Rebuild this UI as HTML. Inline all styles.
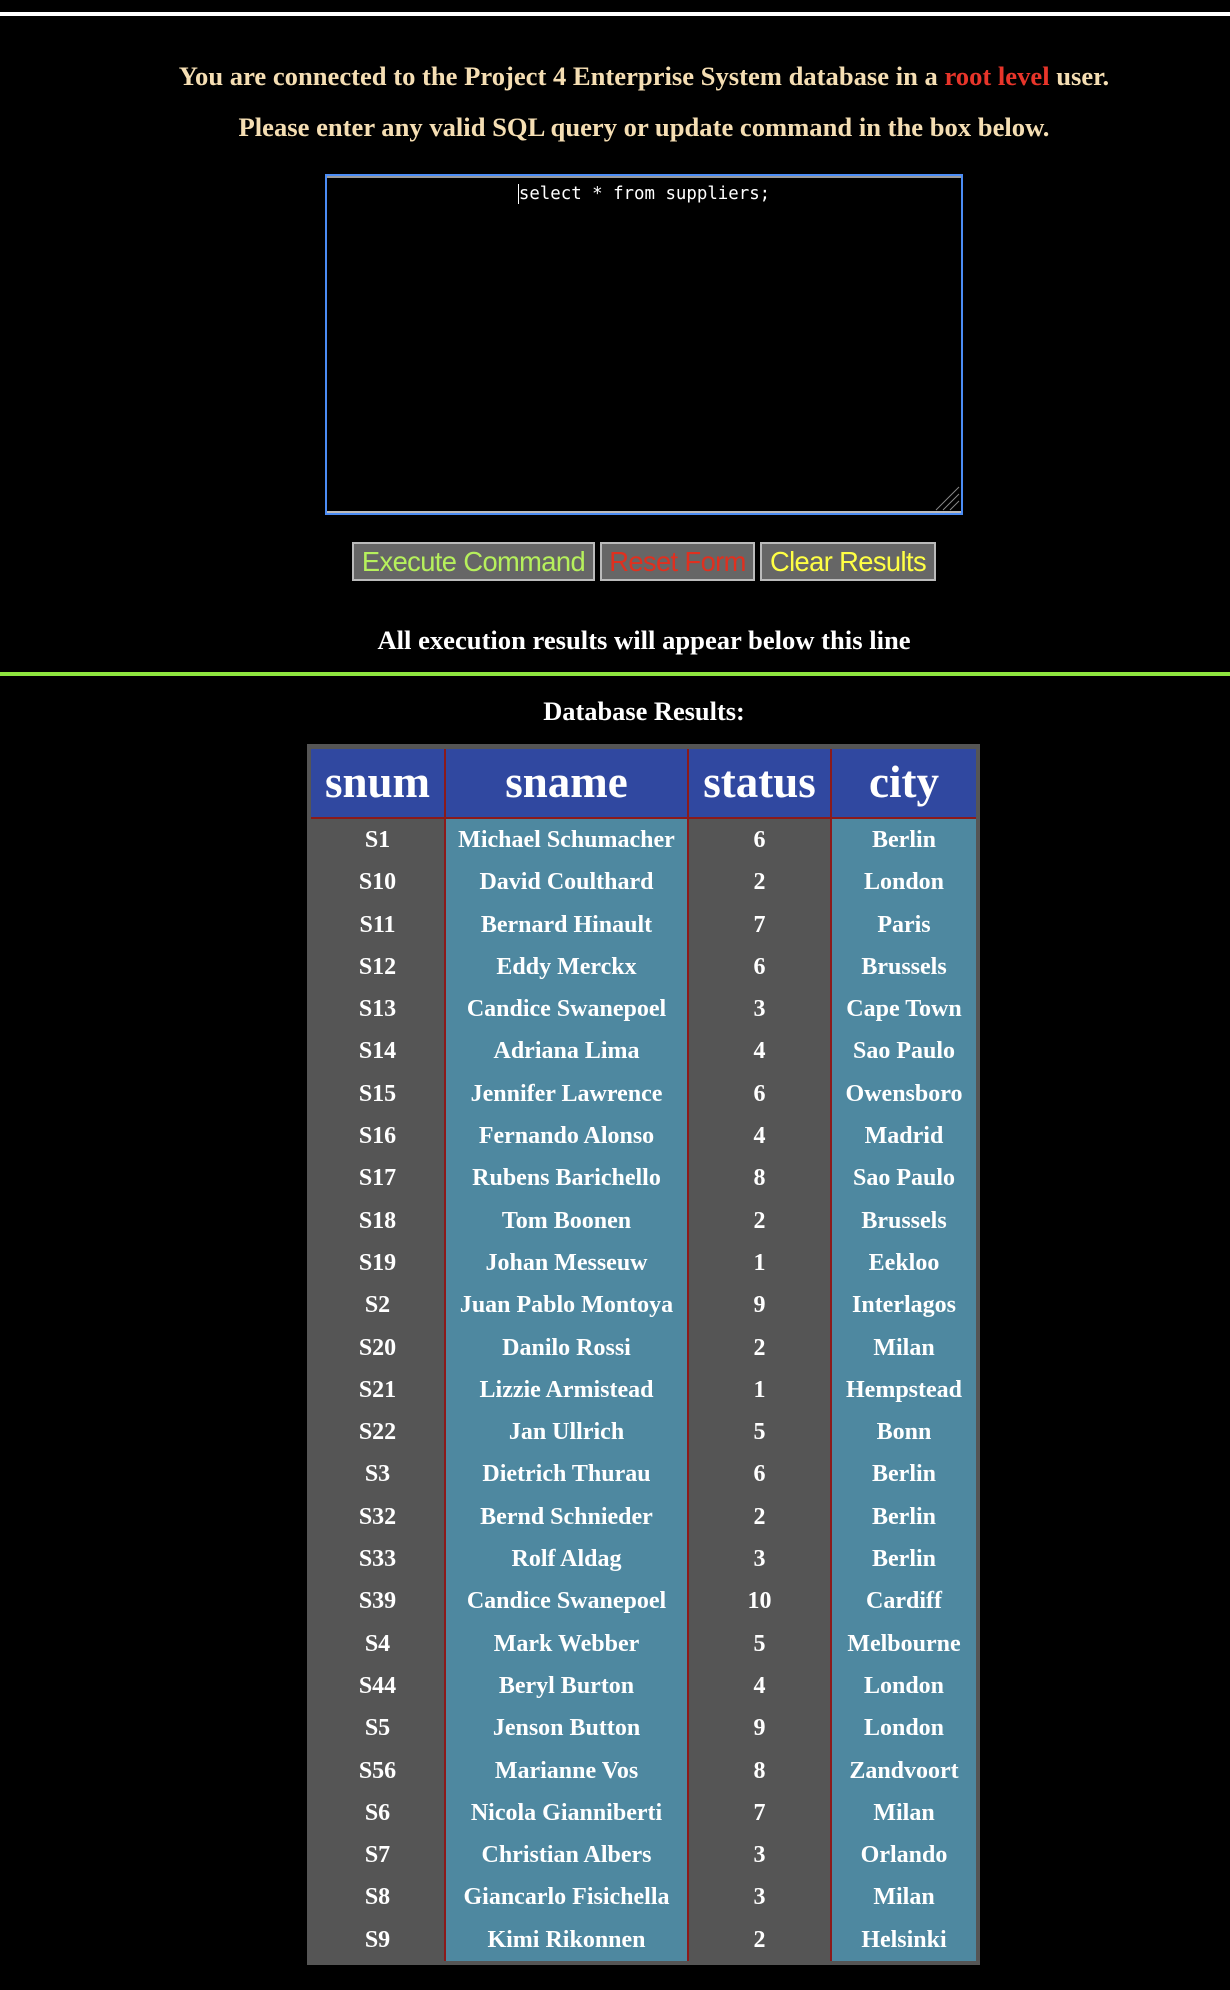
<!DOCTYPE html>
<html><head><meta charset="utf-8"><style>
*{margin:0;padding:0;box-sizing:border-box}
html,body{width:1230px;height:1990px;background:#000;overflow:hidden}
body{position:relative;font-family:"Liberation Serif",serif;font-weight:bold}
.abs{position:absolute}
.c{left:29px;width:1230px;text-align:center;white-space:nowrap}
.wheat{color:#f5deb3;font-size:26.6px;line-height:30px}
.btn{position:absolute;top:542px;height:39px;background:#666;border:2px solid #bbb;font-family:"Liberation Sans",sans-serif;font-weight:normal;font-size:27.3px;line-height:35px;text-align:center;letter-spacing:-0.6px;white-space:nowrap;overflow:hidden}
.tbl{position:absolute;left:307px;top:744px;width:673px;height:1221px;background:#555;padding:5px 4px}
.row{display:flex;width:665px}
.row div{text-align:center;color:#fff;white-space:nowrap}
.h div{height:70px;background:#3048a0;font-size:45px;line-height:66px;border-bottom:2px solid #8b1a1a}
.d div{height:42.3px;font-size:24px;line-height:42px}
.c1{width:133px}
.c2{width:245px;border-left:2px solid #8b1a1a;border-right:2px solid #8b1a1a}
.c3{width:141px}
.c4{width:146px;border-left:2px solid #8b1a1a}
.d .c2,.d .c4{background:#4e88a0}
</style></head><body>
<div class="abs" style="left:0;top:12px;width:1230px;height:4px;background:#fff"></div>
<div class="abs c wheat" style="top:61px">You are connected to the Project 4 Enterprise System database in a <span style="color:#e8352a">root level</span> user.</div>
<div class="abs c wheat" style="top:112px">Please enter any valid SQL query or update command in the box below.</div>
<div class="abs" style="left:325px;top:174px;width:638px;height:341px;border:2px solid #4b8cf5;box-shadow:inset 0 2px 0 #999,inset 0 -2px 0 #bbb;background:#000">
<div style="font-family:'DejaVu Sans Mono','Liberation Mono',monospace;font-weight:normal;color:#fff;font-size:17.4px;text-align:center;margin-top:7px;line-height:22px"><span style="border-left:1px solid #fff">select * from suppliers;</span></div>
<svg class="abs" style="right:1px;bottom:2px" width="26" height="26"><path d="M25 2L2 25M25 9L9 25M25 16L16 25" stroke="#888" stroke-width="1"/></svg>
</div>
<div class="btn" style="left:352px;width:243px;color:#b6f05c">Execute Command</div>
<div class="btn" style="left:600px;width:155px;color:#e0301f">Reset Form</div>
<div class="btn" style="left:760px;width:176px;color:#ffff44">Clear Results</div>
<div class="abs c" style="top:625px;color:#fff;font-size:26.6px;line-height:30px">All execution results will appear below this line</div>
<div class="abs" style="left:0;top:672px;width:1230px;height:4px;background:#8ee53f"></div>
<div class="abs c" style="top:696px;color:#fff;font-size:26.4px;line-height:30px">Database Results:</div>
<div class="tbl">
<div class="row h"><div class="c1">snum</div><div class="c2">sname</div><div class="c3">status</div><div class="c4">city</div></div>
<div class="row d"><div class="c1">S1</div><div class="c2">Michael Schumacher</div><div class="c3">6</div><div class="c4">Berlin</div></div>
<div class="row d"><div class="c1">S10</div><div class="c2">David Coulthard</div><div class="c3">2</div><div class="c4">London</div></div>
<div class="row d"><div class="c1">S11</div><div class="c2">Bernard Hinault</div><div class="c3">7</div><div class="c4">Paris</div></div>
<div class="row d"><div class="c1">S12</div><div class="c2">Eddy Merckx</div><div class="c3">6</div><div class="c4">Brussels</div></div>
<div class="row d"><div class="c1">S13</div><div class="c2">Candice Swanepoel</div><div class="c3">3</div><div class="c4">Cape Town</div></div>
<div class="row d"><div class="c1">S14</div><div class="c2">Adriana Lima</div><div class="c3">4</div><div class="c4">Sao Paulo</div></div>
<div class="row d"><div class="c1">S15</div><div class="c2">Jennifer Lawrence</div><div class="c3">6</div><div class="c4">Owensboro</div></div>
<div class="row d"><div class="c1">S16</div><div class="c2">Fernando Alonso</div><div class="c3">4</div><div class="c4">Madrid</div></div>
<div class="row d"><div class="c1">S17</div><div class="c2">Rubens Barichello</div><div class="c3">8</div><div class="c4">Sao Paulo</div></div>
<div class="row d"><div class="c1">S18</div><div class="c2">Tom Boonen</div><div class="c3">2</div><div class="c4">Brussels</div></div>
<div class="row d"><div class="c1">S19</div><div class="c2">Johan Messeuw</div><div class="c3">1</div><div class="c4">Eekloo</div></div>
<div class="row d"><div class="c1">S2</div><div class="c2">Juan Pablo Montoya</div><div class="c3">9</div><div class="c4">Interlagos</div></div>
<div class="row d"><div class="c1">S20</div><div class="c2">Danilo Rossi</div><div class="c3">2</div><div class="c4">Milan</div></div>
<div class="row d"><div class="c1">S21</div><div class="c2">Lizzie Armistead</div><div class="c3">1</div><div class="c4">Hempstead</div></div>
<div class="row d"><div class="c1">S22</div><div class="c2">Jan Ullrich</div><div class="c3">5</div><div class="c4">Bonn</div></div>
<div class="row d"><div class="c1">S3</div><div class="c2">Dietrich Thurau</div><div class="c3">6</div><div class="c4">Berlin</div></div>
<div class="row d"><div class="c1">S32</div><div class="c2">Bernd Schnieder</div><div class="c3">2</div><div class="c4">Berlin</div></div>
<div class="row d"><div class="c1">S33</div><div class="c2">Rolf Aldag</div><div class="c3">3</div><div class="c4">Berlin</div></div>
<div class="row d"><div class="c1">S39</div><div class="c2">Candice Swanepoel</div><div class="c3">10</div><div class="c4">Cardiff</div></div>
<div class="row d"><div class="c1">S4</div><div class="c2">Mark Webber</div><div class="c3">5</div><div class="c4">Melbourne</div></div>
<div class="row d"><div class="c1">S44</div><div class="c2">Beryl Burton</div><div class="c3">4</div><div class="c4">London</div></div>
<div class="row d"><div class="c1">S5</div><div class="c2">Jenson Button</div><div class="c3">9</div><div class="c4">London</div></div>
<div class="row d"><div class="c1">S56</div><div class="c2">Marianne Vos</div><div class="c3">8</div><div class="c4">Zandvoort</div></div>
<div class="row d"><div class="c1">S6</div><div class="c2">Nicola Gianniberti</div><div class="c3">7</div><div class="c4">Milan</div></div>
<div class="row d"><div class="c1">S7</div><div class="c2">Christian Albers</div><div class="c3">3</div><div class="c4">Orlando</div></div>
<div class="row d"><div class="c1">S8</div><div class="c2">Giancarlo Fisichella</div><div class="c3">3</div><div class="c4">Milan</div></div>
<div class="row d"><div class="c1">S9</div><div class="c2">Kimi Rikonnen</div><div class="c3">2</div><div class="c4">Helsinki</div></div>
</div>
</body></html>
